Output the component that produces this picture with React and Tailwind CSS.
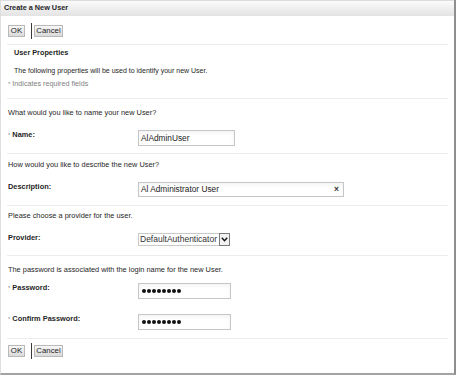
import React from "react";

const font = { fontFamily: '"Liberation Sans", Arial, sans-serif' };

function Btn({ children, w }) {
  return (
    <div
      className={`h-[12px] ${w} flex items-center justify-center border border-[#b9b9b9] bg-gradient-to-b from-[#f7f7f7] to-[#dadada] text-[7.8px] leading-none text-[#222]`}
    >
      {children}
    </div>
  );
}

function Toolbar() {
  return (
    <div className="flex items-center h-[16px] pl-[7px]">
      <Btn w="w-[17px]">OK</Btn>
      <div className="w-px h-[16px] bg-[#3a3a3a] ml-[6px] mr-[2px]" />
      <Btn w="w-[29px]">Cancel</Btn>
    </div>
  );
}

function Star() {
  return <span className="text-[#8a8a8a] font-normal text-[6px] align-top mr-[2px]">*</span>;
}

function Label({ children, req }) {
  return (
    <div className="w-[130px] h-[10px] leading-[10px] text-[7.4px] font-bold text-[#1f1f1f] shrink-0">
      {req && <Star />}
      {children}
    </div>
  );
}

function Question({ children }) {
  return <div className="h-[10px] leading-[10px] text-[7.4px] text-[#262626]">{children}</div>;
}

function Dots() {
  return (
    <div className="flex gap-[1px] pl-[3px]">
      {Array.from({ length: 8 }).map((_, i) => (
        <span key={i} className="w-[4px] h-[4px] rounded-full bg-[#111]" />
      ))}
    </div>
  );
}

export default function App() {
  return (
    <div className="w-[456px] h-[376px] bg-white" style={font}>
      <div className="w-[456px] h-[375px] flex flex-col border-l border-l-[#dedede] border-r-2 border-r-[#8e8e8e] border-b-2 border-b-[#a3a3a3]">
        {/* title */}
        <div className="h-[16px] shrink-0 border-t border-[#dcdcdc] bg-gradient-to-b from-[#fbfbfb] to-[#e3e3e3] pl-[3px] flex items-center">
          <span className="text-[7.3px] font-bold text-[#262626]">Create a New User</span>
        </div>

        <div className="mt-[7px]">
          <Toolbar />
        </div>

        <div className="mx-[6px] mt-[5px] border-t border-[#ececec]" />

        {/* section 1 */}
        <div className="pt-[3px] pb-[9px]">
          <div className="pl-[13px] h-[10px] leading-[10px] text-[7.3px] font-bold text-[#1f1f1f]">User Properties</div>
          <div className="pl-[13px] mt-[8px] h-[10px] leading-[10px] text-[7px] text-[#262626]">
            The following properties will be used to identify your new User.
          </div>
          <div className="pl-[7px] mt-[3px] h-[10px] leading-[10px] text-[7.2px] text-[#808080]">
            <Star />Indicates required fields
          </div>
        </div>

        {/* name */}
        <div className="mx-[6px] border-t border-[#ececec]" />
        <div className="pl-[7px] pt-[9px] pb-[7px]">
          <Question>What would you like to name your new User?</Question>
          <div className="flex items-start mt-[12px]">
            <Label req>Name:</Label>
            <div className="w-[97px] h-[16px] border border-[#c6c6c6] shadow-inner flex items-center pl-[2px] text-[8.3px] text-[#1a1a1a]">
              AlAdminUser
            </div>
          </div>
        </div>

        {/* description */}
        <div className="mx-[6px] border-t border-[#ececec]" />
        <div className="pl-[7px] pt-[6px] pb-[8px]">
          <Question>How would you like to describe the new User?</Question>
          <div className="flex items-start mt-[12px]">
            <Label>Description:</Label>
            <div className="w-[206px] h-[15px] border border-[#c6c6c6] shadow-inner flex items-center justify-between pl-[2px] pr-[4px] text-[8.3px] text-[#1a1a1a]">
              <span>Al Administrator User</span>
              <span className="text-[8.5px] font-bold text-[#333]">×</span>
            </div>
          </div>
        </div>

        {/* provider */}
        <div className="mx-[6px] border-t border-[#ececec]" />
        <div className="pl-[7px] pt-[5px] pb-[9px]">
          <Question>Please choose a provider for the user.</Question>
          <div className="flex items-start mt-[12px]">
            <Label>Provider:</Label>
            <div className="flex h-[13px] items-stretch">
              <div className="w-[81px] border border-r-0 border-[#c9c9c9] flex items-center pl-[1px] text-[8.5px] text-[#333] overflow-hidden whitespace-nowrap">
                DefaultAuthenticator
              </div>
              <div className="w-[11px] border border-[#7a7a7a] bg-[#f2f2f2] flex items-center justify-center">
                <svg width="7" height="5" viewBox="0 0 7 5">
                  <path d="M0.8 0.8 L3.5 3.8 L6.2 0.8" fill="none" stroke="#111" strokeWidth="1.4" />
                </svg>
              </div>
            </div>
          </div>
        </div>

        {/* password */}
        <div className="mx-[6px] border-t border-[#ececec]" />
        <div className="pl-[7px] pt-[9px] pb-[8px]">
          <Question>The password is associated with the login name for the new User.</Question>
          <div className="flex items-start mt-[8px]">
            <Label req>Password:</Label>
            <div className="w-[93px] h-[16px] border border-[#c6c6c6] shadow-inner flex items-center">
              <Dots />
            </div>
          </div>
          <div className="flex items-start mt-[15px]">
            <Label req>Confirm Password:</Label>
            <div className="w-[93px] h-[16px] border border-[#c6c6c6] shadow-inner flex items-center">
              <Dots />
            </div>
          </div>
        </div>

        {/* bottom toolbar */}
        <div className="mx-[6px] border-t border-[#ececec]" />
        <div className="mt-[4px]">
          <Toolbar />
        </div>
      </div>
    </div>
  );
}
